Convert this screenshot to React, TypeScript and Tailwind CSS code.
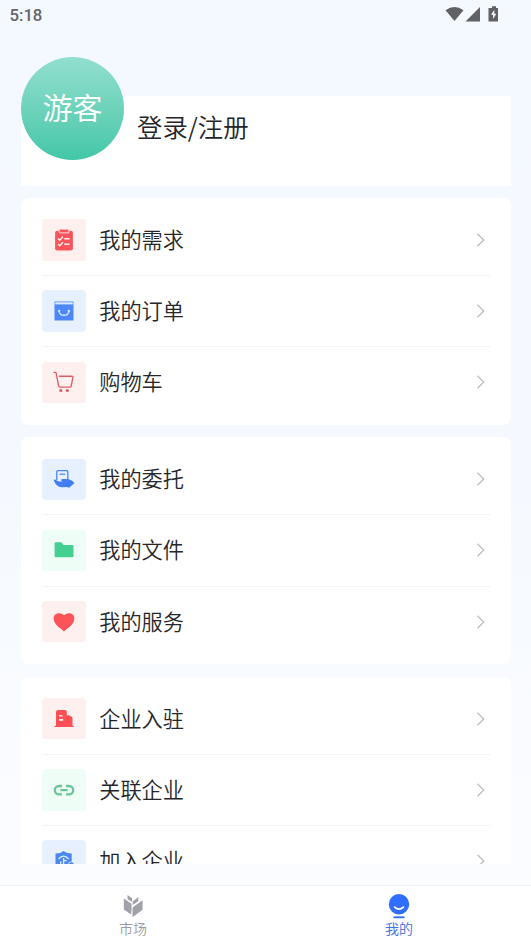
import type { ReactNode } from 'react';

type Item = { label: string; tint: string; icon: ReactNode };

const Svg = ({ children }: { children: ReactNode }) => (
  <svg width="24" height="24" viewBox="0 0 24 24" fill="none">{children}</svg>
);

const clipboard = (
  <Svg>
    <rect x="3.1" y="2.8" width="17.8" height="19.6" rx="2" fill="#fb545b" />
    <rect x="7.1" y="1.1" width="9.8" height="3.8" rx="1" fill="#fb545b" stroke="#fff0f0" strokeWidth="0.9" />
    <path d="M6 10.5l1.7 1.7 3.2-3.4M12.3 10.7h5.2M6 16l1.7 1.7 3.2-3.4M12.3 16.3h5.2" stroke="#fff0f0" strokeWidth="1.4" />
  </Svg>
);

const bag = (
  <Svg>
    <path d="M2.5 2.5h19v19h-19z" fill="#4d88f8" />
    <path d="M3.2 3.3h17.6v2.1H3.2z" fill="#dceaff" />
    <path d="M7.2 12.2c.4 5.4 9.2 5.4 9.6 0" stroke="#d0e3ff" strokeWidth="1.4" strokeLinecap="round" />
    <circle cx="7.2" cy="11.8" r="1.1" fill="#e6f0ff" />
    <circle cx="16.8" cy="11.8" r="1.1" fill="#e6f0ff" />
  </Svg>
);

const cart = (
  <Svg>
    <path d="M2 2.3h1.1q.8 0 1 .9l2.5 12.6q.3 1.300 1.500 1.300h9.900q1 0 1.200-1l1.700-8.700q.2-1.200-1-1.200H7.200" stroke="#df5d67" strokeWidth="1.35" strokeLinecap="round" strokeLinejoin="round" />
    <circle cx="8.8" cy="20.5" r="1.6" fill="#df5d67" />
    <circle cx="15.3" cy="20.5" r="1.6" fill="#df5d67" />
  </Svg>
);

const entrust = (
  <Svg>
    <path d="M4.8 13V4.700q0-1 1-1h9q1 0 1 1V13" stroke="#4b85ef" strokeWidth="1.3" />
    <path d="M7.500 7.200h5.800" stroke="#4b85ef" strokeWidth="1.2" />
    <path d="M1.600 12.800q1.400-.7 2.800.5l2.500 1.100 3.300.2c.4-.8-1.200-.8-1.100-1.700.1-.9 1.300-.9 2.300-.9h4c2.100 0 3 1.100 5 2l2.100 2-5.400 4.800-2.300-.8-5 .3q-5.900-.3-8.200-7.500z" fill="#427ff4" />
  </Svg>
);

const folder = (
  <Svg>
    <path d="M3.800 4.300h5.700l2 2.700h8.800q1.200 0 1.200 1.200v9.900q0 1.200-1.200 1.200H3.800q-1.200 0-1.200-1.200V5.500q0-1.200 1.200-1.200z" fill="#45cf91" />
  </Svg>
);

const heart = (
  <Svg>
    <path d="M12 21.400C9.800 19.500 1.600 14.500 1.600 8.600c0-3.200 2.200-5.300 5.100-5.300 2.200 0 4.100.8 5.300 2 1.200-1.200 3.100-2 5.300-2 2.900 0 5.100 2.100 5.100 5.300 0 5.900-8.200 10.900-10.400 12.800z" fill="#fe5358" />
  </Svg>
);

const building = (
  <Svg>
    <path d="M4 18.700V5q0-2 2-2h6.800q2 0 2 2v3.300h2.100l2.600 1.200q1 .7 1 1.900v7.300h1.200V20H2.400v-1.300z" fill="#fd5057" />
    <path d="M7.100 8.700h3.300M7.100 12.900h4.100" stroke="#fff0f0" strokeWidth="1.6" />
  </Svg>
);

const link = (
  <Svg>
    <path d="M10 8H7a4.200 4.200 0 0 0 0 8.400h3M14 8h3a4.200 4.200 0 0 1 0 8.400h-3M8.400 12.200h7.200" stroke="#68c699" strokeWidth="2.3" />
  </Svg>
);

const shield = (
  <Svg>
    <path d="M3.500 4.500Q8.700 4.500 11.600 2q2.900 2.500 8.100 2.500V17L12 22l-8.500-4z" fill="#4c87ef" />
    <path d="M6.500 10q4.900-5.700 10.200 0M11.600 9V16M11.700 11.700h3M8.700 12.200v3.300M7 16h8" stroke="#dceaff" strokeWidth="1.3" />
    <circle cx="19.300" cy="15.800" r="3" fill="#4c87ef" stroke="#e7f0ff" strokeWidth=".8" />
  </Svg>
);

const groups: Item[][] = [
  [
    { label: '我的需求', tint: 'bg-[#fff0f0]', icon: clipboard },
    { label: '我的订单', tint: 'bg-[#e7f0ff]', icon: bag },
    { label: '购物车', tint: 'bg-[#fff0f0]', icon: cart },
  ],
  [
    { label: '我的委托', tint: 'bg-[#e7f0ff]', icon: entrust },
    { label: '我的文件', tint: 'bg-[#effdf7]', icon: folder },
    { label: '我的服务', tint: 'bg-[#fff0f0]', icon: heart },
  ],
  [
    { label: '企业入驻', tint: 'bg-[#fff0f0]', icon: building },
    { label: '关联企业', tint: 'bg-[#effdf7]', icon: link },
    { label: '加入企业', tint: 'bg-[#e7f0ff]', icon: shield },
  ],
];

function StatusBar() {
  return (
    <div className="flex h-[30px] shrink-0 items-center justify-between pr-8 pl-[9.5px] text-[#626469]">
      <span className="pt-px font-[Roboto,sans-serif] text-[16.7px] leading-[30px] font-medium">5:18</span>
      <svg width="54" height="18" viewBox="0 0 54 18" fill="#606165" className="mb-0.5">
        <path d="M.5 5.2Q9.500-1 18.500 5.200L9.500 16z" />
        <path d="M35 2v14.400H20.500z" />
        <path d="M45 3h2V1.300h4V3h2v13.400h-9.500V3z" />
        <path d="M49.300 4.700l-3.300 5h2.100v4.300l3.200-5.200h-2z" fill="#f4f8ff" />
      </svg>
    </div>
  );
}

function Row({ item, last }: { item: Item; last: boolean }) {
  return (
    <div className={`flex h-[71.2px] items-center border-b ${last ? 'border-transparent' : 'border-[#f3f4f6]'}`}>
      <div className={`flex h-[41.500px] w-[43.500px] items-center justify-center rounded-[4px] ${item.tint}`}>{item.icon}</div>
      <span className="mb-[2px] ml-[13.300px] text-[21.2px] leading-[30px] text-[#25262a]">{item.label}</span>
      <svg width="10" height="16" viewBox="0 0 10 16" className="mr-[3.500px] ml-auto" fill="none">
        <path d="M1.500 1.800L7.700 8l-6.200 6.200" stroke="#bcbec2" strokeWidth="1.3" />
      </svg>
    </div>
  );
}

export default function App() {
  return (
    <div className="flex h-[945px] w-[531px] flex-col overflow-hidden bg-linear-to-b from-[#f4f8ff] via-[#f5f9ff] to-[#fcfdff] font-['Noto_Sans_CJK_SC',sans-serif] font-[350]">
      <StatusBar />
      <main className="flex h-[834px] shrink-0 flex-col gap-[12.600px] overflow-hidden pt-[66px] pr-[20px] pl-[21px]">
        <header className="flex h-[89.500px] shrink-0 bg-white">
          <div className="-mt-[39px] flex size-[103px] shrink-0 items-center justify-center rounded-full bg-linear-to-b from-[#91dfcf] to-[#42c7a7] pb-[6px] text-[30px] leading-none text-white">
            游客
          </div>
          <span className="mt-[11.500px] ml-[13px] text-[25.400px] leading-[36px] text-[#242529]">登录/注册</span>
        </header>
        {groups.map((items) => (
          <section key={items[0].label} className="h-[226.800px] shrink-0 rounded-[8px] bg-white pt-[6.700px] pr-[21.500px] pl-[21.400px]">
            {items.map((item, i) => (
              <Row key={item.label} item={item} last={i === items.length - 1} />
            ))}
          </section>
        ))}
      </main>
      <nav className="mt-[21px] grid h-[60px] w-[532px] shrink-0 grid-cols-2 border-t border-[#eff0f3] bg-white text-[14px] leading-[20px]">
        <div className="flex flex-col items-center pt-[8px] text-[#9a9ba2]">
          <svg width="24" height="25" viewBox="0 0 24 25" fill="#a0a1a9">
            <path d="M2.800 4.500l7.800 5.200v4.600l-.4 6.200-7.400-5zM21.600 6.200v9.600L11.500 23.300v-8.500q0-1.500 1.300-2.400zM6.500 1l4.600 3.200v3.900L6.500 5.300zM17.300 3v4.200l-5.600 3.900V7.500z" />
          </svg>
          <span className="-mt-px">市场</span>
        </div>
        <div className="flex flex-col items-center pt-[8px] text-[#3e6fe0]">
          <svg width="24" height="25" viewBox="0 0 24 25" fill="none">
            <circle cx="12" cy="10.200" r="10.200" fill="#306eff" />
            <path d="M7.600 13.100q4.400 4.200 8.800 0" stroke="#fff" strokeWidth="1.700" strokeLinecap="round" />
            <path d="M6.500 23.300h11" stroke="#306eff" strokeWidth="1.900" />
          </svg>
          <span className="-mt-px">我的</span>
        </div>
      </nav>
    </div>
  );
}
